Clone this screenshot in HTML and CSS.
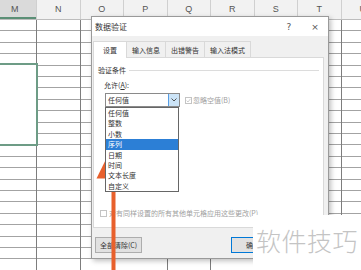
FILE: index.html
```html
<html>
<head>
  <title>数据验证</title>
  <link rel="stylesheet" href="styles.css">
</head>
<body>
  <div class="sheet">
    <div class="col-heads">
      <div class="col-head active">M</div>
      <div class="col-head">N</div>
      <div class="col-head">O</div>
      <div class="col-head">P</div>
      <div class="col-head">Q</div>
      <div class="col-head">R</div>
      <div class="col-head">S</div>
      <div class="col-head">T</div>
      <div class="col-head">U</div>
    </div>
    <div class="cells"></div>
  </div>
  <div class="selection"></div>

  <div class="dialog">
    <div class="dialog-title">
      <span>数据验证</span>
      <span class="title-buttons"><span>?</span><span>×</span></span>
    </div>
    <div class="dialog-body">
      <div class="tabs">
        <div class="tab selected">设置</div>
        <div class="tab">输入信息</div>
        <div class="tab">出错警告</div>
        <div class="tab">输入法模式</div>
      </div>
      <div class="panel">
        <div class="group-title">验证条件</div>
        <div class="field-label">允许(<u>A</u>):</div>
        <div class="combo-row">
          <div class="combo">
            <span>任何值</span>
            <span class="combo-arrow">
              <svg width="6" height="4" viewBox="0 0 6 4"><path d="M0.5 0.5 L3 3 L5.5 0.5" fill="none" stroke="#444" stroke-width="0.9"/></svg>
            </span>
            <ul class="dropdown">
              <li>任何值</li>
              <li>整数</li>
              <li>小数</li>
              <li class="highlight">序列</li>
              <li>日期</li>
              <li>时间</li>
              <li>文本长度</li>
              <li>自定义</li>
            </ul>
          </div>
          <div class="check ignore">
            <span class="box">
              <svg width="5" height="5" viewBox="0 0 5 5"><path d="M0.6 2.6 L2 4 L4.5 0.8" fill="none" stroke="#c2c2c2" stroke-width="0.8"/></svg>
            </span>
            忽略空值(B)
          </div>
        </div>
        <div class="check apply-all"><span class="box"></span>对有同样设置的所有其他单元格应用这些更改(P)</div>
      </div>
      <div class="dialog-footer">
        <button class="btn">全部清除(C)</button>
        <button class="btn ok">确定</button>
      </div>
    </div>
  </div>

  <svg class="arrow" width="361" height="270" viewBox="0 0 361 270">
    <polygon points="112.5,146 96.5,178.5 128.5,178.5" fill="#e8602c"/>
    <rect x="111.5" y="176" width="4" height="94" fill="#e8602c"/>
  </svg>

  <div class="watermark">软件技巧</div>
</body>
</html>
```

FILE: styles.css
```css
body {
  margin: 0;
  width: 361px;
  height: 270px;
  overflow: hidden;
  background: #ffffff;
  font-family: "Noto Sans CJK SC", sans-serif;
  position: relative;
}

/* spreadsheet behind the dialog */
.sheet {
  margin-left: -6.5px;
  width: 367.5px;
  height: 270px;
  overflow: hidden;
  display: flex;
  flex-direction: column;
}
.col-heads {
  display: flex;
  height: 19px;
  background: #f2f2f2;
  border-bottom: 1px solid #bdbdbd;
}
.col-head {
  flex: none;
  width: 43.5px;
  box-sizing: border-box;
  border-right: 1px solid #d0d0d0;
  text-align: center;
  font: 9px/19px "Liberation Sans", sans-serif;
  color: #555555;
}
.col-head.active {
  background: #dadada;
  box-shadow: inset 0 -2px #5b8f76;
}
.col-head:last-child {
  text-align: left;
  padding-left: 18px;
}
.cells {
  flex: 1;
  background-image:
    repeating-linear-gradient(to right, transparent 0 42.5px, #7d7d7d 42.5px 43.5px),
    repeating-linear-gradient(to bottom, transparent 0 10.4px, #a3a3a3 10.4px 11.4px);
}
.selection {
  position: absolute;
  left: -2px;
  top: 63px;
  width: 40px;
  height: 83px;
  box-sizing: border-box;
  background: #ffffff;
  border: 2px solid #6d9c86;
}

/* dialog window */
.dialog {
  position: absolute;
  left: 91px;
  top: 16px;
  width: 238px;
  height: 243px;
  box-sizing: border-box;
  border: 1px solid #9a9a9a;
  background: #f0f0f0;
  box-shadow: 2px 2px 5px rgba(0, 0, 0, 0.25);
  display: flex;
  flex-direction: column;
  color: #333333;
  font-size: 7px;
}
.dialog-title {
  height: 19px;
  background: #ffffff;
  display: flex;
  align-items: center;
  justify-content: space-between;
  padding-left: 3px;
  font-size: 8px;
}
.title-buttons {
  display: flex;
  gap: 10px;
  padding-right: 5px;
}
.title-buttons span {
  width: 16px;
  text-align: center;
  color: #555555;
  font: 9px "DejaVu Sans", sans-serif;
}
.dialog-body {
  flex: 1;
  display: flex;
  flex-direction: column;
  padding: 5px 4px 0 1px;
}
.tabs {
  display: flex;
  align-items: flex-end;
  height: 16px;
  position: relative;
  z-index: 1;
}
.tab {
  height: 16px;
  box-sizing: border-box;
  border: 1px solid #d9d9d9;
  border-bottom: none;
  padding: 0 5px;
  margin-left: -1px;
  display: flex;
  align-items: center;
}
.tab.selected {
  height: 17px;
  margin-left: 0;
  margin-bottom: -1px;
  padding: 0 9px;
  background: #ffffff;
}
.panel {
  height: 171px;
  box-sizing: border-box;
  background: #ffffff;
  border: 1px solid #d9d9d9;
  display: flex;
  flex-direction: column;
  padding: 7px 4px 9px 4px;
}
.group-title {
  display: flex;
  align-items: center;
  line-height: 10px;
}
.group-title::after {
  content: "";
  flex: 1;
  height: 1px;
  background: #dcdcdc;
  margin-left: 3px;
}
.field-label {
  margin: 5px 0 0 6px;
  line-height: 10px;
}
.combo-row {
  display: flex;
  align-items: center;
  margin: 3px 0 0 7px;
}
.combo {
  position: relative;
  width: 75px;
  height: 14px;
  box-sizing: border-box;
  border: 1px solid #8a8a8a;
  display: flex;
  align-items: center;
  padding-left: 2px;
}
.combo-arrow {
  margin-left: auto;
  width: 10px;
  height: 12px;
  background: #cce4f7;
  border-left: 1px solid #569de5;
  display: flex;
  align-items: center;
  justify-content: center;
}
.dropdown {
  position: absolute;
  left: -1px;
  top: 13px;
  width: 74px;
  box-sizing: border-box;
  margin: 0;
  padding: 0;
  list-style: none;
  background: #ffffff;
  border: 1px solid #666666;
  z-index: 2;
}
.dropdown li {
  height: 10.4px;
  line-height: 10.4px;
  padding-left: 2px;
}
.dropdown li.highlight {
  background: #2c7fd6;
  color: #ffffff;
}
.check {
  display: flex;
  align-items: center;
  gap: 1px;
  color: #a0a0a0;
  line-height: 10px;
}
.check .box {
  width: 7px;
  height: 7px;
  box-sizing: border-box;
  border: 1px solid #c4c4c4;
  display: flex;
  align-items: center;
  justify-content: center;
}
.ignore {
  margin-left: 5px;
}
.apply-all {
  margin-top: auto;
  margin-left: 2px;
  gap: 2px;
  white-space: nowrap;
}
.dialog-footer {
  flex: 1;
  display: flex;
  align-items: flex-start;
  padding: 9px 0 0 2px;
}
.btn {
  height: 16px;
  box-sizing: border-box;
  border: 1px solid #adadad;
  background: #e1e1e1;
  color: #333333;
  font: 7px "Noto Sans CJK SC", sans-serif;
  padding: 0 4px;
}
.btn.ok {
  width: 44px;
  margin: 0 49px 0 auto;
  border-color: #0078d7;
}

/* annotation overlay */
.arrow {
  position: absolute;
  left: 0;
  top: 0;
  pointer-events: none;
}
.watermark {
  position: absolute;
  left: 253px;
  top: 215px;
  width: 108px;
  height: 55px;
  box-sizing: border-box;
  background: #ffffff;
  padding: 12px 0 0 3px;
  font-size: 25px;
  font-weight: 300;
  line-height: 26px;
  letter-spacing: 0.5px;
  color: #c4c4c4;
}
```
